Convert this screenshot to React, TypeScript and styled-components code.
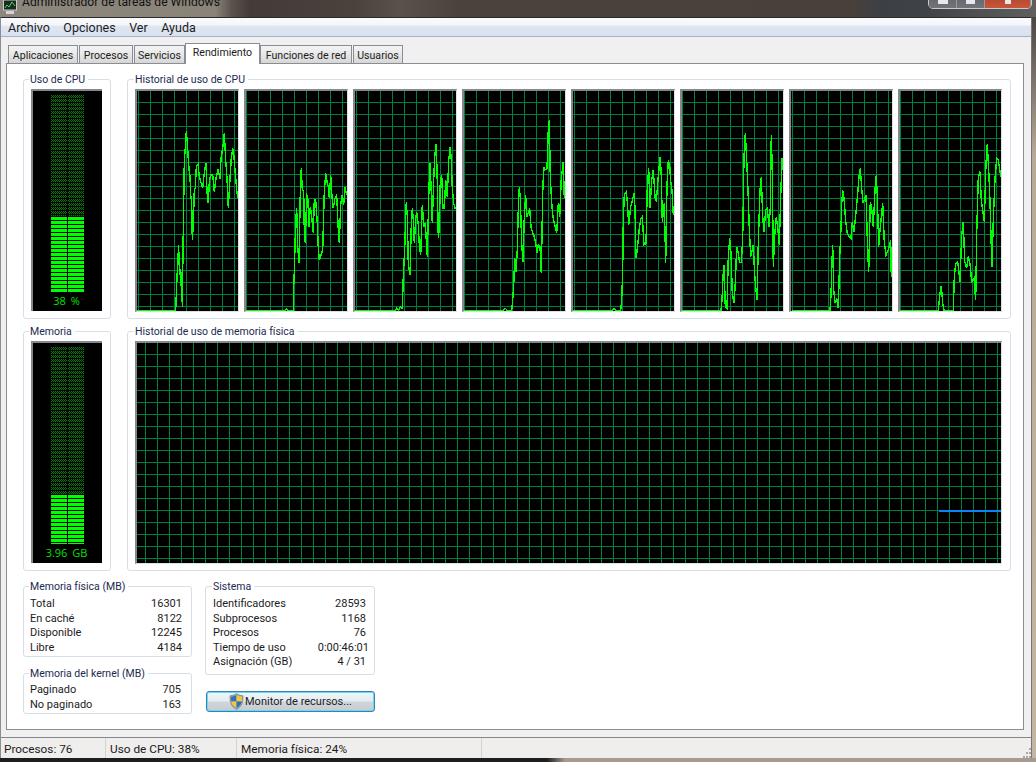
import React from "react";
import styled, { createGlobalStyle } from "styled-components";

const UI = `Roboto, "Open Sans", "Liberation Sans", sans-serif`;

const Global = createGlobalStyle`
  html, body { margin: 0; padding: 0; background: #6f675e; }
  body { font-family: ${UI}; font-size: 11px; color: #1c1c1c; }
`;

const Page = styled.div`
  width: 1036px; height: 762px; overflow: hidden;
  display: flex; flex-direction: column;
`;
const TitleBar = styled.header`
  height: 17px; flex: none; position: relative; overflow: hidden;
  display: flex; align-items: flex-end; padding-left: 2px; gap: 4px;
  background: linear-gradient(90deg, #8d867c 0, #8a8378 215px, #5a534c 232px, #423b37 250px, #4b423d 355px, #5a514b 400px, #4b423d 460px, #4a403a 850px, #3c4045 880px, #3f4246 925px, #5f5f5e 1036px);
`;
const TitleText = styled.span`
  font-size: 12.1px; line-height: 17px; color: #111; height: 17px; position: relative; top: -6px;
`;
const Controls = styled.div`
  position: absolute; right: 4px; top: -12px; height: 19px; display: flex;
  border: 1px solid #c9c9c9; border-radius: 0 0 5px 5px; overflow: hidden;
`;
const Ctrl = styled.div<{ $w: number; $red?: boolean }>`
  width: ${p => p.$w}px; border-right: 1px solid #9a9a9a; display: flex; justify-content: center;
  background: ${p => (p.$red ? "linear-gradient(#a33a22, #c8563c)" : "linear-gradient(#5a5a60, #73737c)")};
`;
const CtrlGlyph = styled.span<{ $w: number }>`
  width: ${p => p.$w}px; height: 15px; background: #e8e8e8;
`;
const Middle = styled.div`
  flex: 1; display: flex; min-height: 0;
`;
const Window = styled.div`
  width: 1032px; flex: none; display: flex; flex-direction: column;
  border-top: 1px solid #2a2a2a; border-left: 1px solid #8e8e92; border-right: 1px solid #76767c;
  box-sizing: border-box; background: #f0f0f0;
`;
const RightEdge = styled.div`
  flex: 1; background: linear-gradient(#4b4541 0, #b9a999 140px, #c4b5a5 100%);
`;
const BottomEdge = styled.div`
  height: 4px; flex: none;
  background: linear-gradient(90deg, #1e1e1e 0, #1e1e1e 547px, #a89a8d 565px, #a89a8d 100%);
`;
const MenuBar = styled.nav`
  height: 18px; flex: none; display: flex; align-items: center; padding-left: 7px; gap: 13.5px;
  background: linear-gradient(#fafbfd 0, #f3f5fa 40%, #dfe5f2 45%, #d9e1f0 100%);
  border-bottom: 1px solid #a8b1c4; font-size: 12.5px;
`;
const MenuItem = styled.span``;
const Body = styled.div`
  flex: 1; display: flex; flex-direction: column; padding: 6px 7px 7px 5px; min-height: 0;
`;
const TabStrip = styled.div`
  height: 20px; flex: none; display: flex; align-items: flex-end; padding-left: 2px; position: relative; z-index: 1;
`;
const Tab = styled.div<{ $active?: boolean; $w: number; $gap: number }>`
  box-sizing: border-box; width: ${p => p.$w}px; height: ${p => (p.$active ? 21 : 18)}px;
  margin-bottom: ${p => (p.$active ? -1 : 0)}px;
  text-align: center; line-height: ${p => (p.$active ? 18 : 20)}px; font-size: 10.6px;
  border: 1px solid #8a8d96; border-bottom: 0;
  margin-right: ${p => p.$gap}px;
  background: ${p => (p.$active ? "#fff" : "linear-gradient(#f4f4f4, #e9e9e9 45%, #d6d6d6)")};
  white-space: nowrap;
`;
const Pane = styled.main`
  box-sizing: border-box; height: 667px; background: #fff; border: 1px solid #8a8d96;
  padding: 15px 13px 0 16px;
  display: flex; flex-direction: column;
`;
const Graphs = styled.div`
  display: grid; grid-template-columns: 88px 884px; column-gap: 16px;
  grid-template-rows: 240px 240px; row-gap: 12px;
`;
const Box = styled.section<{ $h?: number }>`
  position: relative; box-sizing: border-box;
  border: 1px solid #d5dfe5; border-radius: 3px;
  ${p => (p.$h ? `height: ${p.$h}px;` : "")}
`;
const Legend = styled.h3<{ $left?: number }>`
  position: absolute; left: ${p => p.$left ?? 5}px; top: -8px; margin: 0; padding: 0 3px 0 1px; background: #fff;
  font-weight: 400; font-size: 10.5px; line-height: 15px; color: #1d2a50; white-space: nowrap;
`;
const Meter = styled.div`
  position: absolute; left: 7px; top: 9px; width: 71px; height: 222px;
  box-sizing: border-box; background: #000;
  border-top: 2px solid #85888c; border-left: 2px solid #85888c;
  display: flex; flex-direction: column; align-items: center;
`;
const MeterLabel = styled.div`
  color: #00e000; font-family: "Open Sans", sans-serif; font-size: 11px; line-height: 14px; margin: 2px 2px 0 0; word-spacing: 2px;
`;
const MeterArt = styled.svg`
  display: block; margin-top: 4px;
`;
const ChartRow = styled.div`
  position: absolute; left: 7px; top: 9px; display: flex; gap: 5px;
`;
const ChartFrame = styled.div<{ $w: number; $h: number }>`
  width: ${p => p.$w}px; height: ${p => p.$h}px; box-sizing: border-box; background: #000;
  border-top: 2px solid #85888c; border-left: 2px solid #85888c;
  border-right: 1px solid #dfe2e4; border-bottom: 1px solid #dfe2e4;
  & > svg { display: block; }
`;
const Lower = styled.div`
  display: flex; gap: 13px; margin-top: 15px;
`;
const LowerCol = styled.div<{ $w: number; $gap: number }>`
  width: ${p => p.$w}px; display: flex; flex-direction: column; gap: ${p => p.$gap}px;
`;
const StatList = styled.div<{ $top: number; $left: number; $right: number }>`
  padding: ${p => p.$top}px ${p => p.$right}px 0 ${p => p.$left}px; display: flex; flex-direction: column;
`;
const StatRow = styled.div`
  display: flex; justify-content: space-between; height: 14.6px; line-height: 14.6px; white-space: nowrap;
`;
const StatValue = styled.span<{ $over?: number }>`
  margin-right: ${p => -(p.$over || 0)}px;
`;
const ActionButton = styled.button`
  box-sizing: border-box; width: 169px; height: 21px; padding: 0; margin: 0 0 0 1px;
  display: flex; align-items: center; justify-content: center; gap: 1px;
  font-family: ${UI}; font-size: 11px; color: #1c1c1c;
  border: 1px solid #3c7fb1; border-radius: 3px;
  box-shadow: inset 0 0 0 1px #67d8f5;
  background: linear-gradient(#f0f6f9 0, #e5ecf0 48%, #d0d7dc 52%, #c6ccd0 100%);
`;
const StatusBar = styled.footer`
  height: 20px; flex: none; display: flex; border-top: 1px solid #83868c; background: #f0eded;
  font-size: 11.8px; line-height: 22px; position: relative;
`;
const StatusCell = styled.div<{ $w: number; $pad: number }>`
  width: ${p => p.$w}px; box-sizing: border-box; padding-left: ${p => p.$pad}px; border-right: 1px solid #d4d1d1; white-space: nowrap;
`;
const Grip = styled.svg`
  position: absolute; right: 0; bottom: 0;
`;

type Pt = [number, number];
const cpu: { off: number; left: number; phase: number; pts: Pt[] }[] = [
  { off: 130, left: 136, phase: 1, pts: [[20,571],[137,571],[139,525],[143,425],[146,375],[147,430],[150,450],[152,497],[155,455],[157,560],[158,455],[161,250],[163,125],[167,65],[169,33],[172,65],[175,118],[178,155],[180,170],[182,225],[185,250],[187,360],[190,315],[193,210],[196,205],[199,140],[204,133],[208,170],[212,185],[218,205],[222,165],[228,128],[231,215],[235,250],[238,185],[242,165],[248,165],[253,215],[258,175],[264,148],[270,178],[273,115],[278,85],[283,40],[287,120],[291,175],[295,265],[300,175],[304,115],[308,85],[311,100],[315,150],[320,210],[323,235]] },
  { off: 130, left: 245, phase: 0, pts: [[347,571],[465,571],[470,566],[475,571],[490,571],[490,530],[493,455],[497,300],[500,265],[503,380],[507,428],[511,215],[514,145],[517,210],[521,215],[523,330],[526,370],[530,225],[533,230],[537,320],[541,260],[545,290],[550,340],[553,240],[557,240],[562,310],[565,385],[568,420],[573,405],[578,390],[583,215],[587,160],[591,185],[595,200],[598,235],[602,165],[606,230],[610,265],[615,235],[620,225],[625,330],[628,370],[632,255],[636,225],[641,255],[645,200],[650,225]] },
  { off: 350, left: 354, phase: 1, pts: [[15,571],[135,571],[140,565],[146,570],[151,560],[157,565],[160,470],[164,385],[167,290],[169,245],[172,290],[175,430],[180,465],[184,315],[187,265],[190,300],[193,370],[197,295],[200,275],[205,315],[208,375],[212,405],[217,255],[222,320],[226,310],[232,410],[237,200],[240,130],[243,195],[247,310],[251,180],[254,110],[258,72],[261,145],[265,355],[268,325],[271,185],[275,165],[279,265],[283,265],[287,180],[292,230],[296,120],[301,80],[304,120],[307,205],[311,250],[316,268]] },
  { off: 350, left: 463, phase: 0, pts: [[342,571],[460,571],[466,565],[472,571],[485,571],[488,540],[491,495],[494,415],[498,455],[502,390],[505,265],[508,200],[511,235],[515,370],[519,425],[523,290],[527,225],[530,290],[535,280],[539,265],[543,320],[548,340],[553,350],[558,375],[561,400],[565,375],[570,380],[574,460],[578,220],[581,140],[585,150],[591,145],[595,30],[598,0],[601,170],[605,250],[609,290],[613,310],[620,340],[625,250],[629,290],[634,175],[640,125],[643,235]] },
  { off: 570, left: 572, phase: 1, pts: [[8,571],[125,571],[132,565],[138,571],[152,571],[155,540],[158,450],[160,300],[163,225],[169,215],[172,245],[176,315],[182,260],[186,245],[192,220],[195,265],[198,415],[202,390],[208,325],[213,295],[217,290],[222,375],[228,370],[232,200],[236,145],[240,265],[245,180],[250,150],[255,230],[259,245],[264,180],[268,135],[271,110],[274,170],[277,305],[283,250],[287,430],[291,195],[295,120],[299,135],[302,185],[306,210],[310,285]] },
  { off: 570, left: 681, phase: 0, pts: [[335,571],[453,571],[456,540],[459,470],[462,435],[466,560],[471,565],[475,410],[479,355],[483,400],[487,520],[492,550],[496,490],[500,380],[505,400],[509,428],[514,428],[518,355],[522,110],[526,40],[530,120],[534,210],[538,325],[542,410],[547,390],[550,375],[554,465],[558,510],[561,540],[565,370],[570,210],[574,170],[578,290],[582,335],[587,270],[592,265],[597,320],[601,265],[604,45],[607,150],[610,440],[614,345],[619,290],[625,340],[628,375],[632,230],[636,115],[639,150]] },
  { off: 790, left: 790, phase: 1, pts: [[5,571],[120,571],[123,525],[126,425],[128,375],[131,510],[135,550],[140,535],[145,565],[149,410],[153,325],[155,250],[158,210],[162,235],[167,305],[172,340],[178,350],[183,355],[187,305],[192,335],[197,285],[202,235],[207,170],[211,145],[215,205],[219,250],[224,235],[228,225],[233,395],[236,455],[241,245],[245,265],[250,320],[255,210],[259,165],[262,225],[266,380],[270,330],[274,290],[278,250],[283,365],[288,405],[295,390],[302,360],[304,470]] },
  { off: 790, left: 899, phase: 0, pts: [[330,571],[445,571],[450,520],[454,498],[458,550],[462,571],[490,571],[493,470],[497,430],[503,425],[510,485],[515,345],[520,305],[524,425],[530,445],[534,410],[540,430],[545,485],[552,475],[557,540],[560,340],[565,170],[570,155],[574,240],[578,270],[583,305],[588,130],[592,72],[596,150],[600,245],[604,380],[606,440],[610,300],[615,175],[620,115],[625,120],[632,170]] },
];

function Grid({ w, h, px, py }: { w: number; h: number; px: number; py: number }) {
  let d = "";
  for (let x = px; x < w; x += 12) d += `M${x} 0h1v${h}h-1z`;
  for (let y = py; y < h; y += 12) d += `M0 ${y}h${w}v1h-${w}z`;
  return <path d={d} fill="#00803f" />;
}

function CpuChart({ off, left, phase, pts }: { off: number; left: number; phase: number; pts: Pt[] }) {
  const W = 101, H = 220;
  const ox = left + 1, oy = 91;
  const line = pts.map(([x, y]) => `${(x / 3 + off - ox).toFixed(1)},${(y / 3 + 120 - oy).toFixed(1)}`).join(" ");
  return (
    <ChartFrame $w={104} $h={223}>
      <svg width={W} height={H}>
        <Grid w={W} h={H} px={phase} py={11} />
        <polyline points={line} fill="none" stroke="#00ff00" strokeWidth={1.4} shapeRendering="crispEdges" />
      </svg>
    </ChartFrame>
  );
}

function MemChart() {
  const W = 864, H = 220;
  return (
    <ChartFrame $w={867} $h={223}>
      <svg width={W} height={H}>
        <Grid w={W} h={H} px={8} py={11} />
        <rect x={802} y={167} width={62} height={2} fill="#0a84f5" />
      </svg>
    </ChartFrame>
  );
}

function MeterBars({ solidFrom, id }: { solidFrom: number; id: string }) {
  const rows: number[] = [];
  for (let y = solidFrom; y < 197; y += 4) rows.push(y);
  return (
    <MeterArt width={33} height={197}>
      <defs>
        <pattern id={id} width={2} height={4} patternUnits="userSpaceOnUse">
          <rect x={0} y={0} width={1} height={1} fill="#008000" />
          <rect x={1} y={1} width={1} height={1} fill="#008000" />
          <rect x={0} y={2} width={1} height={1} fill="#008000" />
        </pattern>
      </defs>
      <rect x={0} y={0} width={16} height={solidFrom - 1} fill={`url(#${id})`} />
      <rect x={17} y={0} width={16} height={solidFrom - 1} fill={`url(#${id})`} />
      {rows.map(y => (
        <g key={y} fill="#00ff00">
          <rect x={0} y={y} width={16} height={3} />
          <rect x={17} y={y} width={16} height={3} />
        </g>
      ))}
    </MeterArt>
  );
}

const Shield = () => (
  <svg width={15} height={17} viewBox="0 0 15 17" style={{ flex: "none" }}>
    <path d="M7.5 .5 C9.5 2 11.5 2.6 14 2.7 C14.4 8.5 13 13.5 7.5 16.5 C2 13.5 .6 8.5 1 2.7 C3.5 2.6 5.5 2 7.5 .5Z" fill="#9aa6b4" stroke="#6b7480" strokeWidth={0.6} />
    <path d="M7.5 2 V8.5 H2.2 C2 6.8 2 5.4 2.1 3.7 C4 3.6 5.8 3.1 7.5 2Z" fill="#2f6fc4" />
    <path d="M7.5 2 C9.2 3.1 11 3.6 12.9 3.7 C13 5.4 13 6.8 12.8 8.5 H7.5Z" fill="#f2c933" />
    <path d="M2.2 8.5 H7.5 V15 C4.4 13.2 2.8 11.1 2.2 8.5Z" fill="#f2c933" />
    <path d="M7.5 8.5 H12.8 C12.2 11.1 10.6 13.2 7.5 15Z" fill="#2f6fc4" />
  </svg>
);

const AppIcon = () => (
  <svg width={16} height={15} viewBox="0 0 16 15" style={{ flex: "none", position: "relative", top: -2 }}>
    <rect x={1.5} y={0} width={13} height={10} fill="#1c2a24" stroke="#c8ccd0" />
    <path d="M3 8 L5 5 L7 7 L10 2 L13 6" stroke="#3fe04a" fill="none" />
    <rect x={4} y={11} width={8} height={3} fill="#d0d4d8" />
  </svg>
);

const physical: [string, string][] = [["Total", "16301"], ["En caché", "8122"], ["Disponible", "12245"], ["Libre", "4184"]];
const kernel: [string, string][] = [["Paginado", "705"], ["No paginado", "163"]];
const sistema: [string, string, number?][] = [
  ["Identificadores", "28593"], ["Subprocesos", "1168"], ["Procesos", "76"], ["Tiempo de uso", "0:00:46:01", 3], ["Asignación (GB)", "4 / 31"],
];

export default function App() {
  return (
    <Page>
      <Global />
      <TitleBar>
        <AppIcon />
        <TitleText>Administrador de tareas de Windows</TitleText>
        <Controls>
          <Ctrl $w={27}><CtrlGlyph $w={10} /></Ctrl>
          <Ctrl $w={27}><CtrlGlyph $w={9} /></Ctrl>
          <Ctrl $w={45} $red><CtrlGlyph $w={6} /></Ctrl>
        </Controls>
      </TitleBar>
      <Middle>
        <Window>
          <MenuBar>
            <MenuItem>Archivo</MenuItem>
            <MenuItem>Opciones</MenuItem>
            <MenuItem>Ver</MenuItem>
            <MenuItem>Ayuda</MenuItem>
          </MenuBar>
          <Body>
            <TabStrip>
              <Tab $w={70} $gap={1}>Aplicaciones</Tab>
              <Tab $w={54} $gap={1}>Procesos</Tab>
              <Tab $w={51} $gap={0}>Servicios</Tab>
              <Tab $w={75} $gap={0} $active>Rendimiento</Tab>
              <Tab $w={92} $gap={1}>Funciones de red</Tab>
              <Tab $w={50} $gap={0}>Usuarios</Tab>
            </TabStrip>
            <Pane>
              <Graphs>
                <Box>
                  <Legend>Uso de CPU</Legend>
                  <Meter>
                    <MeterBars solidFrom={122} id="m1" />
                    <MeterLabel>38 %</MeterLabel>
                  </Meter>
                </Box>
                <Box>
                  <Legend $left={6}>Historial de uso de CPU</Legend>
                  <ChartRow>
                    {cpu.map(c => <CpuChart key={c.left} {...c} />)}
                  </ChartRow>
                </Box>
                <Box>
                  <Legend>Memoria</Legend>
                  <Meter>
                    <MeterBars solidFrom={148} id="m2" />
                    <MeterLabel>3.96 GB</MeterLabel>
                  </Meter>
                </Box>
                <Box>
                  <Legend $left={6}>Historial de uso de memoria física</Legend>
                  <ChartRow>
                    <MemChart />
                  </ChartRow>
                </Box>
              </Graphs>
              <Lower>
                <LowerCol $w={169} $gap={16}>
                  <Box $h={71}>
                    <Legend>Memoria física (MB)</Legend>
                    <StatList $top={10} $left={6} $right={9}>
                      {physical.map(([a, b]) => <StatRow key={a}><span>{a}</span><StatValue>{b}</StatValue></StatRow>)}
                    </StatList>
                  </Box>
                  <Box $h={41}>
                    <Legend>Memoria del kernel (MB)</Legend>
                    <StatList $top={9} $left={6} $right={10}>
                      {kernel.map(([a, b]) => <StatRow key={a}><span>{a}</span><StatValue>{b}</StatValue></StatRow>)}
                    </StatList>
                  </Box>
                </LowerCol>
                <LowerCol $w={170} $gap={16}>
                  <Box $h={89}>
                    <Legend $left={6}>Sistema</Legend>
                    <StatList $top={10} $left={7} $right={8}>
                      {sistema.map(([a, b, o]) => <StatRow key={a}><span>{a}</span><StatValue $over={o}>{b}</StatValue></StatRow>)}
                    </StatList>
                  </Box>
                  <ActionButton><Shield />Monitor de recursos...</ActionButton>
                </LowerCol>
              </Lower>
            </Pane>
          </Body>
          <StatusBar>
            <StatusCell $w={105} $pad={3}>Procesos: 76</StatusCell>
            <StatusCell $w={131} $pad={4}>Uso de CPU: 38%</StatusCell>
            <StatusCell $w={245} $pad={4}>Memoria física: 24%</StatusCell>
            <Grip width={9} height={10} viewBox="0 0 9 10">
              {[[7, 0], [7, 4], [4, 4], [7, 8], [4, 8], [1, 8]].map(([x, y]) => (
                <rect key={`${x}-${y}`} x={x} y={y} width={2} height={2} fill="#a9a9a9" />
              ))}
            </Grip>
          </StatusBar>
        </Window>
        <RightEdge />
      </Middle>
      <BottomEdge />
    </Page>
  );
}
